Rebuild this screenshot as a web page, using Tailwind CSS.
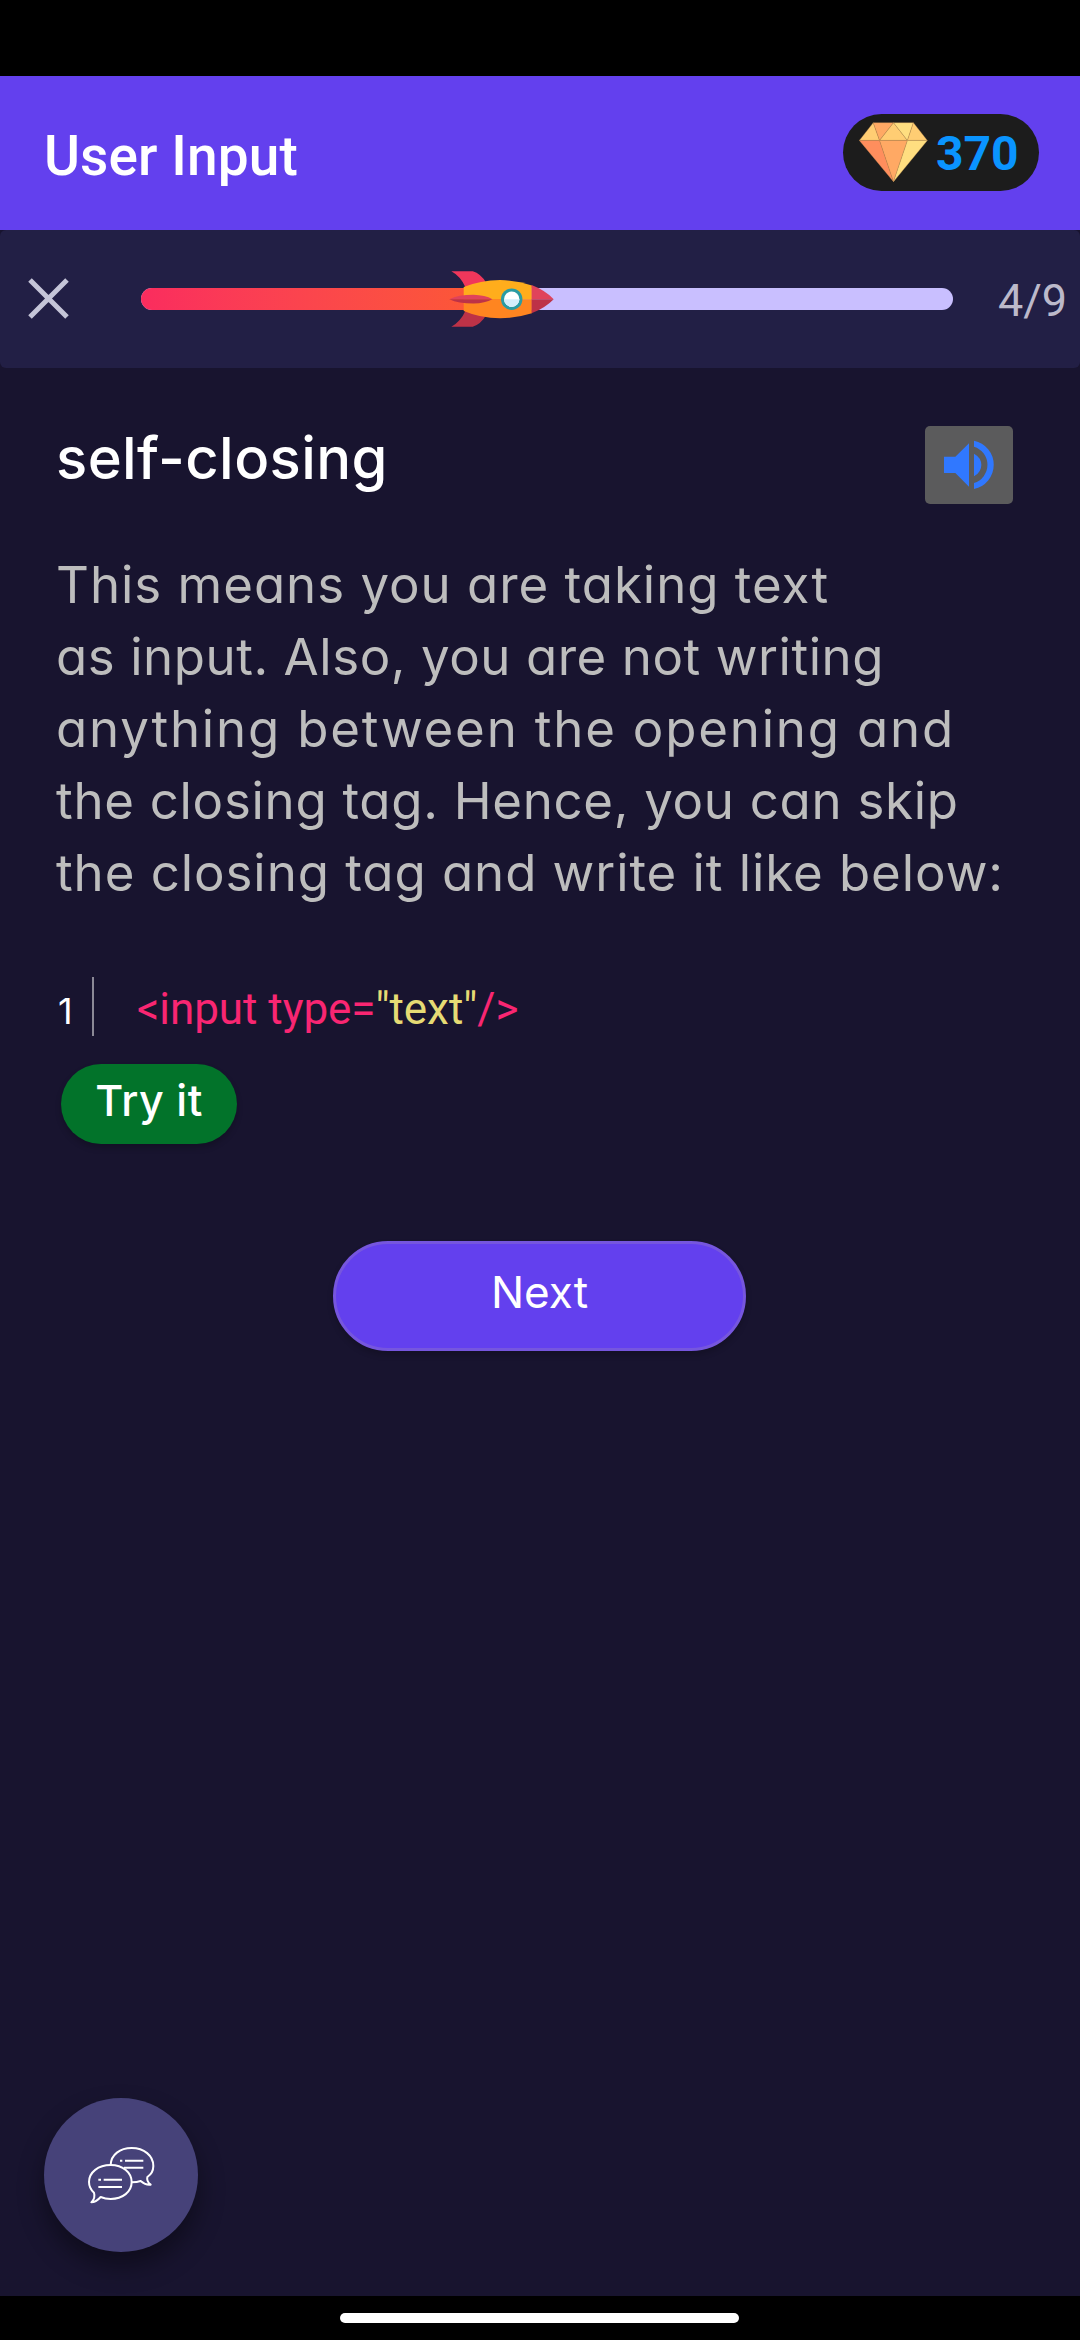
<!DOCTYPE html>
<html lang="en">
<head>
<meta charset="utf-8">
<title>User Input</title>
<script src="https://cdn.jsdelivr.net/npm/@tailwindcss/browser@4"></script>
</head>
<body class="bg-black">
<div class="flex h-[2340px] w-[1080px] flex-col overflow-hidden bg-[#18142f] font-['Roboto',sans-serif]">
  <div class="h-[76px] shrink-0 bg-black"></div>
  <header class="flex h-[154px] shrink-0 items-center justify-between bg-[#6340ee] pl-[44px] pr-[41px]">
    <h1 class="pt-[6px] text-[55px] leading-none font-medium tracking-[0.1px] text-white">User Input</h1>
    <div class="mb-[2px] flex h-[77px] w-[196px] items-center rounded-full bg-[#1c1c1c] pl-4">
      <svg class="h-[60px] w-[69px] shrink-0" viewBox="117 97 208 179" preserveAspectRatio="none" stroke="#b98a4c" stroke-width="1" stroke-linejoin="round">
        <path d="M118 152 160 99 179 152Z" fill="#ffcd73"/>
        <path d="M160 99H221L179 152Z" fill="#ffa964"/>
        <path d="M221 99 263 152H179Z" fill="#ffcd73"/>
        <path d="M221 99H281L263 152Z" fill="#ffde80"/>
        <path d="M281 99 323 152H263Z" fill="#ffcd73"/>
        <path d="M118 152H179L221 275Z" fill="#ff8e5d"/>
        <path d="M179 152H263L221 275Z" fill="#ffa964"/>
        <path d="M263 152H323L221 275Z" fill="#ffde80"/>
      </svg>
      <span class="ml-2 pt-[4px] text-[48px] leading-none font-bold text-[#0a94ff]">370</span>
    </div>
  </header>
  <section class="flex h-[138px] shrink-0 items-center rounded-md bg-[#221f45] pl-[28px]">
    <svg class="h-[42px] w-[42px] shrink-0" viewBox="0 0 42 42" stroke="#c5c5d8" stroke-width="5"><path d="M2 2 39 39M39 2 2 39"/></svg>
    <div class="relative ml-[71px] h-[22px] w-[812px] shrink-0 rounded-full bg-[#c9bfff]">
      <div class="h-full rounded-l-full bg-linear-to-r from-[#fa2c5e] to-[#fc5a31]" style="width:44.4%"></div>
      <svg class="absolute -top-[17px] left-[308px] h-[56px] w-[105px]" viewBox="57 62 314 167" preserveAspectRatio="none">
        <path d="M64 63H128Q152 70 168 97L107 112Q92 78 64 63Z" fill="#f0375b"/>
        <path d="M64 228H128Q152 221 168 194L107 179Q92 213 64 228Z" fill="#bd3247"/>
        <path d="M101 110Q150 90 210 89Q262 90 305 105V147H101Z" fill="#ffad1c"/>
        <path d="M101 181Q150 202 210 203Q262 202 305 188V146H101Z" fill="#ff8520"/>
        <path d="M304 104Q345 120 370 146H304Z" fill="#e0435b"/>
        <path d="M304 188Q345 172 370 146H304Z" fill="#bd3247"/>
        <path d="M58 146Q85 133 130 133Q165 134 187 146Z" fill="#e0435b"/>
        <path d="M58 146Q85 159 130 159Q165 158 187 146Z" fill="#bd3247"/>
        <circle cx="244.500" cy="146" r="32" fill="#2a9ba3"/>
        <circle cx="244.500" cy="146" r="23" fill="#fff"/>
        <path d="M221.500 146a23 23 0 0 0 46 0Z" fill="#d3eefb"/>
      </svg>
    </div>
    <span class="ml-[45px] pt-[2px] text-[45px] leading-none text-[#bcb9ca]">4/9</span>
  </section>
  <main class="flex flex-col px-14 pt-[58px] font-['Inter',sans-serif] [font-feature-settings:'cv11']">
    <div class="flex h-[78px] justify-between pr-[11px]">
      <h2 class="-mt-[3px] text-[58px] leading-[70px] font-medium tracking-[0.4px] whitespace-nowrap text-white">self-closing</h2>
      <button class="h-[78px] w-[88px] rounded-[5px] bg-[#5b5b5c]" aria-label="Read aloud">
        <svg class="block h-[78px] w-[88px]" viewBox="315 618 264 234" fill="#3078ff">
          <path d="M372 710H406L447 670V800L406 759H372Z"/>
          <path d="M462 701Q484 713 484 735T462 769Z"/>
          <path d="M462 662A74 74 0 0 1 462 807V789A57 57 0 0 0 462 680Z"/>
        </svg>
      </button>
    </div>
    <p class="mt-[45px] text-[51px] leading-[72px] whitespace-nowrap text-[#bdbdbd]">
      <span class="tracking-[0.97px]">This means you are taking text</span><br>
      <span class="tracking-[0.55px]">as input. Also, you are not writing</span><br>
      <span class="tracking-[1.8px]">anything between the opening and</span><br>
      <span class="tracking-[0.7px]">the closing tag. Hence, you can skip</span><br>
      <span class="tracking-[0.93px]">the closing tag and write it like below:</span>
    </p>
    <div class="mt-[68px] flex h-[59px] items-center">
      <span class="w-9 pt-[9px] pl-[2px] text-[36px] leading-none text-white">1</span>
      <span class="h-full w-[2px] bg-[#8b8996]"></span>
      <code class="ml-[43px] pt-[5px] font-['Roboto',sans-serif] text-[44px] leading-none tracking-[-0.05px] whitespace-nowrap text-[#f92672]">&lt;input type=<span class="text-[#e6db74]">"text"</span>/&gt;</code>
    </div>
    <button class="mt-7 ml-[5px] h-20 w-[176px] rounded-full bg-[#02732a] pb-[7px] text-[43px] leading-none font-medium tracking-[0.5px] text-white shadow-[0_4px_6px_rgba(0,0,0,0.2)]">Try it</button>
    <button class="mt-[97px] ml-[277px] h-[110px] w-[413px] rounded-full border-3 border-[#7656de] bg-[#6340ee] pb-[9px] text-[44px] leading-none text-white shadow-[0_4px_6px_rgba(0,0,0,0.2)]">Next</button>
  </main>
  <div class="mt-auto flex shrink-0 pb-[44px] pl-[44px]">
    <button class="size-[154px] rounded-full bg-[#464279] shadow-[0_14px_26px_rgba(0,0,0,0.4)]" aria-label="Discussion">
      <svg class="block size-[154px]" viewBox="72 84 462 462" fill="none" stroke="#fff" stroke-width="6" stroke-linejoin="round">
        <path d="M272 285C273 254 300 234 335 234C372 234 400 257 400 288C400 301 394 313 382 321C380 330 384 338 392 344C381 346 370 340 362 333C354 336 346 337 335 337"/>
        <path d="M300 272H307M315 272H370M312 293H370"/>
        <path d="M272 285C309 285 335 308 335 336C335 365 308 387 272 387C261 387 251 385 242 381C234 390 225 397 214 397C223 388 225 378 222 368C212 359 207 349 207 336C207 307 235 285 272 285Z"/>
        <path d="M235 329H243M251 329H306M235 351H306"/>
      </svg>
    </button>
  </div>
  <div class="flex h-11 shrink-0 justify-center bg-black pt-[17px]"><div class="mr-px h-[10px] w-[399px] rounded-full bg-white"></div></div>
</div>
</body>
</html>
